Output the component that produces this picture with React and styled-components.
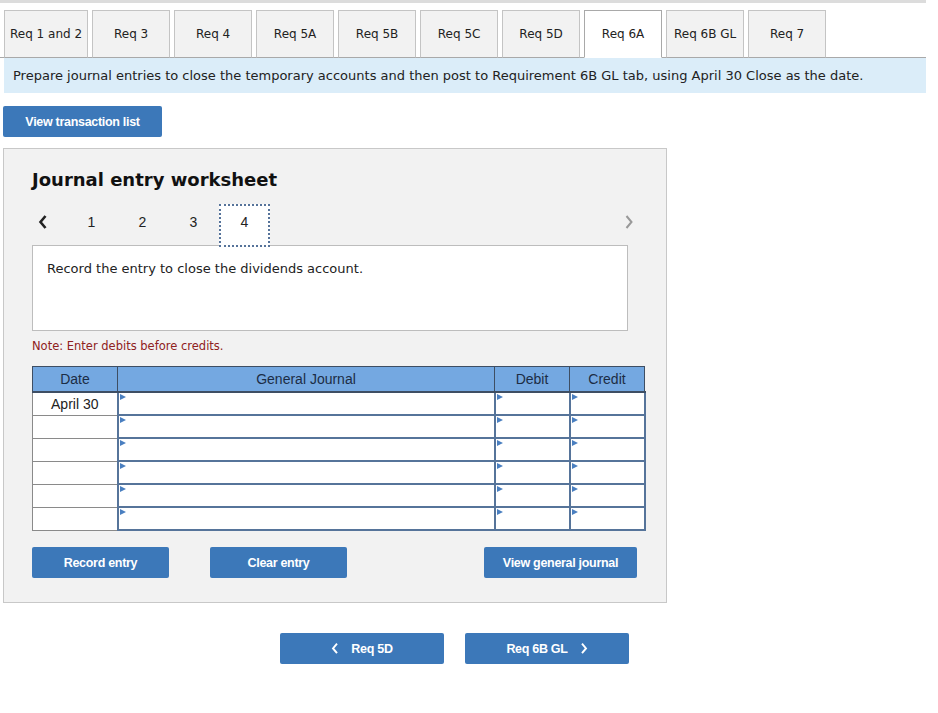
import React from "react"
import styled, { createGlobalStyle } from "styled-components"

const GlobalStyle = createGlobalStyle`
  body {
    margin: 0;
    background: #ffffff;
    font-family: "DejaVu Sans", Verdana, sans-serif;
  }
`

const Page = styled.div`
  width: 926px;
`

const TopBar = styled.div`
  height: 3px;
  background: #dcdcdc;
`

const TabBar = styled.div`
  display: flex;
  gap: 4px;
  margin-top: 7px;
  padding-left: 4px;
  border-bottom: 1px solid #a9a9a9;
  height: 47px;
`

const Tab = styled.div`
  box-sizing: border-box;
  min-width: 78px;
  padding: 0 5px;
  height: 48px;
  display: flex;
  align-items: center;
  justify-content: center;
  border: 1px solid ${(p) => (p.$active ? "#a9a9a9" : "#c4c4c4")};
  border-bottom: 1px solid ${(p) => (p.$active ? "#ffffff" : "#a9a9a9")};
  background: ${(p) => (p.$active ? "#ffffff" : "#f2f2f2")};
  font-size: 12px;
  color: #222;
  white-space: nowrap;
`

const Banner = styled.div`
  margin-left: 4px;
  background: #dbedf9;
  height: 35px;
  display: flex;
  align-items: center;
  padding-left: 9px;
  font-size: 13px;
  color: #222;
`

const BlueButton = styled.button`
  box-sizing: border-box;
  width: ${(p) => p.$w}px;
  height: 31px;
  border: none;
  border-radius: 2px;
  background: #3c78b9;
  color: #ffffff;
  font-family: "Liberation Sans Narrow", "Arial Narrow", "Liberation Sans", sans-serif;
  font-stretch: condensed;
  font-weight: bold;
  font-size: 12.5px;
  letter-spacing: -0.3px;
  display: flex;
  align-items: center;
  justify-content: center;
  gap: 12px;
  padding: 0;
  cursor: pointer;
`

const TopActions = styled.div`
  padding: 13px 0 0 3px;
`

const Panel = styled.div`
  box-sizing: border-box;
  margin: 11px 0 0 3px;
  width: 664px;
  height: 455px;
  background: #f2f2f2;
  border: 1px solid #c8c8c8;
  padding: 20px 0 0 28px;
`

const Title = styled.h2`
  margin: 0;
  font-size: 18px;
  font-weight: bold;
  color: #111;
  height: 22px;
  line-height: 22px;
`

const Pager = styled.div`
  display: flex;
  align-items: flex-start;
  width: 605px;
  height: 43px;
  margin-top: 13px;
  position: relative;
  z-index: 1;
`

const PagerArrow = styled.span`
  display: flex;
  align-items: center;
  justify-content: center;
  width: 16px;
  height: 35px;
  margin-left: ${(p) => p.$ml || 0}px;
  color: ${(p) => (p.$muted ? "#999" : "#222")};
`

const PageNums = styled.div`
  display: flex;
  margin-left: 15px;
`

const PageNum = styled.span`
  box-sizing: border-box;
  width: 51px;
  height: 43px;
  display: flex;
  align-items: center;
  justify-content: center;
  padding-bottom: 8px;
  font-family: "Liberation Sans", Arial, sans-serif;
  font-size: 14px;
  color: #222;
  ${(p) =>
    p.$active &&
    `
    background: #ffffff;
    border: 2px dotted #56739a;
  `}
`

const Description = styled.div`
  box-sizing: border-box;
  width: 596px;
  height: 86px;
  margin-top: -2px;
  background: #ffffff;
  border: 1px solid #bdbdbd;
  padding: 15px 0 0 14px;
  font-size: 13px;
  color: #222;
`

const Note = styled.div`
  margin-top: 8px;
  font-size: 11.5px;
  color: #8f2121;
`

const Journal = styled.table`
  margin-top: 13px;
  border-collapse: collapse;
  table-layout: fixed;
  width: 612px;
  font-family: "Liberation Sans", Arial, sans-serif;
  font-size: 14px;
`

const HeadCell = styled.th`
  width: ${(p) => p.$w}px;
  height: 24px;
  padding: 0;
  background: #74a8e1;
  color: #1c2d45;
  font-weight: normal;
  font-size: 14px;
  border: 1px solid #3e4e63;
  border-bottom: 2px solid #3e4e63;
`

const EntryRow = styled.tr`
  height: 23px;
`

const DateCell = styled.td`
  padding: 0;
  background: #ffffff;
  border: 1px solid #8a8a8a;
  text-align: center;
  color: #222;
`

const InputCell = styled.td`
  position: relative;
  padding: 0;
  background: #ffffff;
  border: 2px solid #56749a;
  &::before {
    content: "";
    position: absolute;
    left: 1px;
    top: 1px;
    border-left: 6px solid #4a7fc0;
    border-top: 3px solid transparent;
    border-bottom: 3px solid transparent;
  }
`

const EntryActions = styled.div`
  display: flex;
  align-items: center;
  width: 605px;
  margin-top: 16px;
  gap: 41px;
`

const Spacer = styled.div`
  flex: 1;
`

const NavRow = styled.div`
  display: flex;
  gap: 21px;
  margin: 30px 0 0 280px;
`

const Chevron = ({ dir = "left", size = 10, stroke = 2.4 }) => (
  <svg width={size} height={size * 1.6} viewBox="0 0 10 16">
    <path
      d={dir === "left" ? "M7.5 2 L2.5 8 L7.5 14" : "M2.5 2 L7.5 8 L2.5 14"}
      fill="none"
      stroke="currentColor"
      strokeWidth={stroke}
    />
  </svg>
)

const tabs = [
  "Req 1 and 2",
  "Req 3",
  "Req 4",
  "Req 5A",
  "Req 5B",
  "Req 5C",
  "Req 5D",
  "Req 6A",
  "Req 6B GL",
  "Req 7",
]

const rows = ["April 30", "", "", "", "", ""]

const App = () => {
  return (
    <Page>
      <GlobalStyle />
      <TopBar />
      <TabBar>
        {tabs.map((t) => (
          <Tab key={t} $active={t === "Req 6A"}>
            {t}
          </Tab>
        ))}
      </TabBar>
      <Banner>
        Prepare journal entries to close the temporary accounts and then post to
        Requirement 6B GL tab, using April 30 Close as the date.
      </Banner>
      <TopActions>
        <BlueButton $w={159}>View transaction list</BlueButton>
      </TopActions>
      <Panel>
        <Title>Journal entry worksheet</Title>
        <Pager>
          <PagerArrow $ml={3}>
            <Chevron dir="left" size={10} stroke={2.6} />
          </PagerArrow>
          <PageNums>
            {[1, 2, 3, 4].map((n) => (
              <PageNum key={n} $active={n === 4}>
                {n}
              </PageNum>
            ))}
          </PageNums>
          <Spacer />
          <PagerArrow $muted>
            <Chevron dir="right" size={10} stroke={2} />
          </PagerArrow>
        </Pager>
        <Description>Record the entry to close the dividends account.</Description>
        <Note>Note: Enter debits before credits.</Note>
        <Journal>
          <thead>
            <tr>
              <HeadCell $w={84}>Date</HeadCell>
              <HeadCell $w={376}>General Journal</HeadCell>
              <HeadCell $w={74}>Debit</HeadCell>
              <HeadCell $w={74}>Credit</HeadCell>
            </tr>
          </thead>
          <tbody>
            {rows.map((d, i) => (
              <EntryRow key={i}>
                <DateCell>{d}</DateCell>
                <InputCell />
                <InputCell />
                <InputCell />
              </EntryRow>
            ))}
          </tbody>
        </Journal>
        <EntryActions>
          <BlueButton $w={137}>Record entry</BlueButton>
          <BlueButton $w={137}>Clear entry</BlueButton>
          <Spacer />
          <BlueButton $w={153}>View general journal</BlueButton>
        </EntryActions>
      </Panel>
      <NavRow>
        <BlueButton $w={164}>
          <Chevron dir="left" size={8} stroke={2.4} />
          Req 5D
        </BlueButton>
        <BlueButton $w={164}>
          Req 6B GL
          <Chevron dir="right" size={8} stroke={2.4} />
        </BlueButton>
      </NavRow>
    </Page>
  )
}

export default App
